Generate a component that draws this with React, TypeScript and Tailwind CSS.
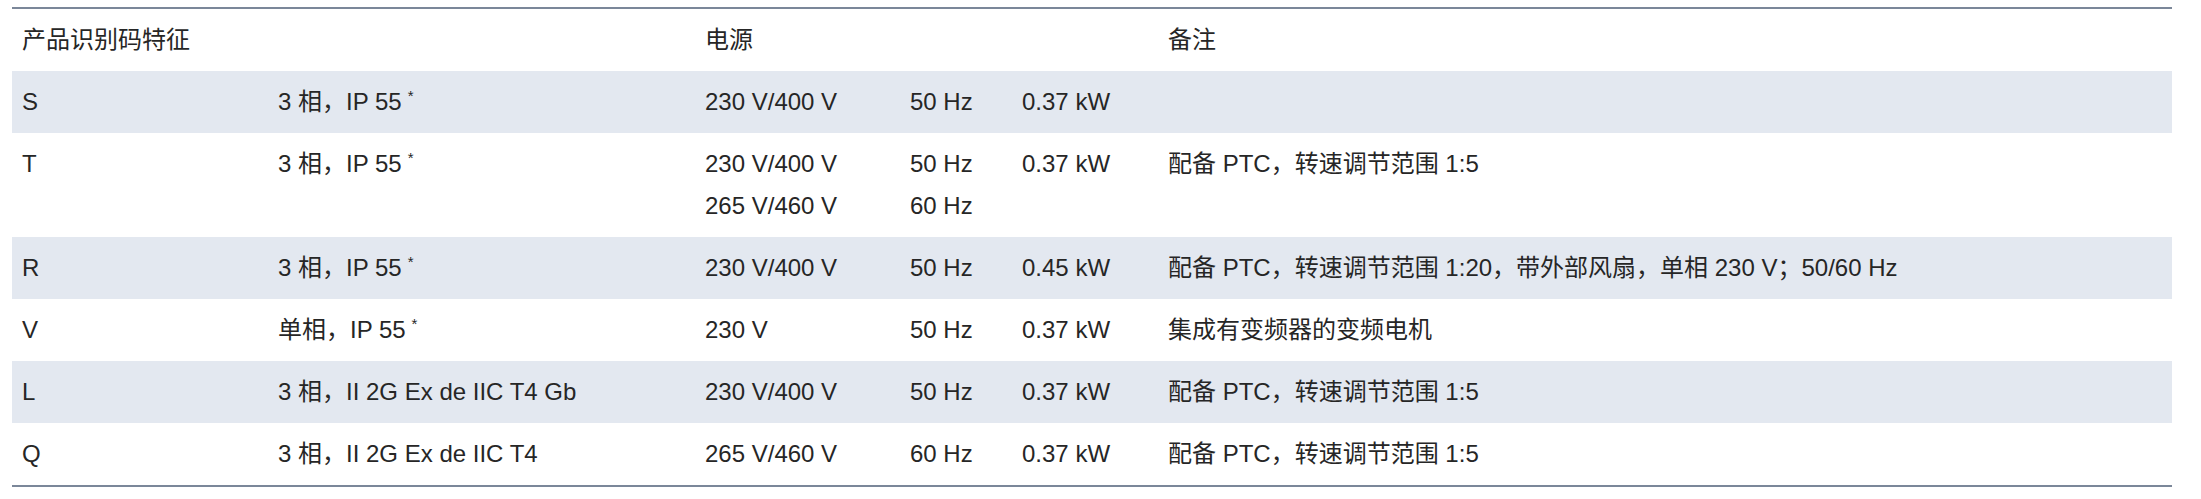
type Row = {
  code: string;
  spec: string;
  star?: boolean;
  volts: string[];
  hz: string[];
  kw: string;
  note: string;
};

const rows: Row[] = [
  { code: 'S', spec: '3 相，IP 55', star: true, volts: ['230 V/400 V'], hz: ['50 Hz'], kw: '0.37 kW', note: '' },
  {
    code: 'T',
    spec: '3 相，IP 55',
    star: true,
    volts: ['230 V/400 V', '265 V/460 V'],
    hz: ['50 Hz', '60 Hz'],
    kw: '0.37 kW',
    note: '配备 PTC，转速调节范围 1:5',
  },
  {
    code: 'R',
    spec: '3 相，IP 55',
    star: true,
    volts: ['230 V/400 V'],
    hz: ['50 Hz'],
    kw: '0.45 kW',
    note: '配备 PTC，转速调节范围 1:20，带外部风扇，单相 230 V；50/60 Hz',
  },
  { code: 'V', spec: '单相，IP 55', star: true, volts: ['230 V'], hz: ['50 Hz'], kw: '0.37 kW', note: '集成有变频器的变频电机' },
  { code: 'L', spec: '3 相，II 2G Ex de IIC T4 Gb', volts: ['230 V/400 V'], hz: ['50 Hz'], kw: '0.37 kW', note: '配备 PTC，转速调节范围 1:5' },
  { code: 'Q', spec: '3 相，II 2G Ex de IIC T4', volts: ['265 V/460 V'], hz: ['60 Hz'], kw: '0.37 kW', note: '配备 PTC，转速调节范围 1:5' },
];

const cell = 'align-top p-[10px] font-normal text-left';

// one fixed-height text line, so mixed Latin/CJK fonts don't stretch the row
function Line({ children }: { children: React.ReactNode }) {
  return <div className="h-[42px] leading-[42px] whitespace-nowrap">{children}</div>;
}

export default function App() {
  return (
    <div className="w-[2201px] h-[499px] bg-white pt-[7px] pl-[12px]">
      <table
        className="w-[2160px] table-fixed border-collapse text-[24px] text-[#262626] border-y-2 border-[#7b8799]"
        style={{ fontFamily: '"Liberation Sans", "Noto Sans CJK SC", sans-serif' }}
      >
        <colgroup>
          <col className="w-[256px]" />
          <col className="w-[427px]" />
          <col className="w-[205px]" />
          <col className="w-[112px]" />
          <col className="w-[146px]" />
          <col />
        </colgroup>
        <thead>
          <tr>
            <th className={cell} colSpan={2}>
              <Line>产品识别码特征</Line>
            </th>
            <th className={cell} colSpan={3}>
              <Line>电源</Line>
            </th>
            <th className={cell}>
              <Line>备注</Line>
            </th>
          </tr>
        </thead>
        <tbody>
          {rows.map((r, i) => (
            <tr key={r.code} className={i % 2 === 0 ? 'bg-[#e3e8f0]' : 'bg-white'}>
              <td className={cell}>
                <Line>{r.code}</Line>
              </td>
              <td className={cell}>
                <Line>
                  {r.spec}
                  {r.star && <span className="relative -top-[9px] ml-[6px] text-[15px]">*</span>}
                </Line>
              </td>
              <td className={cell}>
                {r.volts.map((v) => (
                  <Line key={v}>{v}</Line>
                ))}
              </td>
              <td className={cell}>
                {r.hz.map((h) => (
                  <Line key={h}>{h}</Line>
                ))}
              </td>
              <td className={cell}>
                <Line>{r.kw}</Line>
              </td>
              <td className={cell}>
                <Line>{r.note}</Line>
              </td>
            </tr>
          ))}
        </tbody>
      </table>
    </div>
  );
}
